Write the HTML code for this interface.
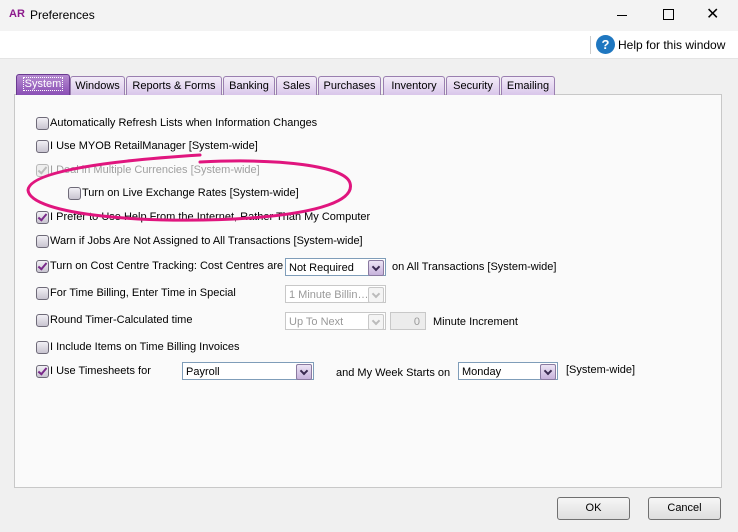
<!DOCTYPE html>
<html><head><style>
body{margin:0;width:738px;height:532px;background:#f0f0f0;font-family:"Liberation Sans",sans-serif;font-size:11px;color:#000;position:relative;overflow:hidden}
.a{position:absolute;white-space:nowrap}
.cb{position:absolute;width:11px;height:11px;border:1px solid #6e6a78;border-radius:3px;background:linear-gradient(#f2f0f5,#c8c4d0)}
.cb.on::after{content:"";position:absolute;left:3px;top:0px;width:3px;height:7px;border:solid #7a2a8a;border-width:0 2px 2px 0;transform:rotate(40deg)}
.cb.dis{border-color:#b8b8b8;background:#eee}
.cb.dis::after{border-color:#bbb}
.tab{position:absolute;top:76px;height:18px;border:1px solid #9a7fb0;border-bottom:none;border-radius:3px 3px 0 0;background:linear-gradient(#f3ecf8,#d9c6ea);text-align:center;line-height:18px;font-size:11px}
.sel{position:absolute;height:18px;border:1px solid #7f9db9;background:#fff;font-size:11px;line-height:18px;padding-left:3px;box-sizing:border-box}
.sel i{position:absolute;right:1px;top:1px;width:14px;height:14px;border:1px solid #8a7aa0;border-radius:2px;background:linear-gradient(#ece4f4,#c7b2dc)}
.sel i::after{content:"";position:absolute;left:4px;top:3px;width:4px;height:4px;border:solid #3a2a50;border-width:0 2px 2px 0;transform:rotate(45deg)}
.sel.d{border-color:#c8c8c8;color:#999}
.sel.d i{border-color:#c8c8c8;background:#f4f4f4}
.sel.d i::after{border-color:#bbb}
.btn{position:absolute;top:497px;width:71px;height:21px;border:1px solid #707070;border-radius:3px;background:linear-gradient(#f6f6f6,#dedede);text-align:center;line-height:21px;font-size:11px}
.g{color:#a0a0a0}
</style></head><body>
<div class="a" style="left:0;top:0;width:738px;height:31px;background:#f3f3f3"></div>
<div class="a" style="left:9px;top:8px;font-weight:bold;color:#8c1a8c;font-size:11px">AR</div>
<div class="a" style="left:30px;top:8px;font-size:12px">Preferences</div>
<div class="a" style="left:617px;top:15px;width:10px;height:1px;background:#000"></div>
<div class="a" style="left:663px;top:9px;width:9px;height:9px;border:1px solid #000"></div>
<div class="a" style="left:706px;top:4px;font-size:16px">✕</div>
<div class="a" style="left:0;top:31px;width:738px;height:27px;background:#fff;border-bottom:1px solid #e4e4e4"></div>
<div class="a" style="left:590px;top:36px;width:1px;height:18px;background:#ccc"></div>
<div class="a" style="left:596px;top:35px;width:19px;height:19px;border-radius:50%;background:#1f77c0;color:#fff;font-weight:bold;text-align:center;line-height:19px;font-size:13px">?</div>
<div class="a" style="left:618px;top:38px;font-size:12px">Help for this window</div>
<div class="a" style="left:14px;top:94px;width:706px;height:392px;background:#fafafa;border:1px solid #c8c8c8"></div>
<div class="tab" style="left:16px;width:52px;top:74px;height:20px;background:linear-gradient(#b58ad0,#8a4fb5);color:#fff;border-color:#6a3a90"><span style="border:1px dotted #fff;padding:0 1px">System</span></div>
<div class="tab" style="left:70px;width:53px">Windows</div>
<div class="tab" style="left:126px;width:94px">Reports &amp; Forms</div>
<div class="tab" style="left:223px;width:50px">Banking</div>
<div class="tab" style="left:276px;width:39px">Sales</div>
<div class="tab" style="left:318px;width:61px">Purchases</div>
<div class="tab" style="left:383px;width:60px">Inventory</div>
<div class="tab" style="left:446px;width:52px">Security</div>
<div class="tab" style="left:501px;width:52px">Emailing</div>

<div class="cb" style="left:36px;top:117px"></div><div class="a" style="left:50px;top:117px">Automatically Refresh Lists when Information Changes</div>
<div class="cb" style="left:36px;top:140px"></div><div class="a" style="left:50px;top:140px">I Use MYOB RetailManager [System-wide]</div>
<div class="cb on dis" style="left:36px;top:164px"></div><div class="a g" style="left:50px;top:164px">I Deal in Multiple Currencies [System-wide]</div>
<div class="cb" style="left:68px;top:187px"></div><div class="a" style="left:82px;top:187px">Turn on Live Exchange Rates [System-wide]</div>
<div class="cb on" style="left:36px;top:211px"></div><div class="a" style="left:50px;top:211px">I Prefer to Use Help From the Internet, Rather Than My Computer</div>
<div class="cb" style="left:36px;top:235px"></div><div class="a" style="left:50px;top:235px">Warn if Jobs Are Not Assigned to All Transactions [System-wide]</div>
<div class="cb on" style="left:36px;top:260px"></div><div class="a" style="left:50px;top:260px">Turn on Cost Centre Tracking: Cost Centres are</div>
<div class="sel" style="left:285px;top:258px;width:101px">Not Required<i></i></div>
<div class="a" style="left:392px;top:261px">on All Transactions [System-wide]</div>
<div class="cb" style="left:36px;top:287px"></div><div class="a" style="left:50px;top:287px">For Time Billing, Enter Time in Special</div>
<div class="sel d" style="left:285px;top:285px;width:101px">1 Minute Billin…<i></i></div>
<div class="cb" style="left:36px;top:314px"></div><div class="a" style="left:50px;top:314px">Round Timer-Calculated time</div>
<div class="sel d" style="left:285px;top:312px;width:101px">Up To Next<i></i></div>
<div class="a" style="left:390px;top:312px;width:36px;height:18px;border:1px solid #c8c8c8;background:#ececec;color:#999;text-align:right;line-height:18px;box-sizing:border-box;padding-right:5px">0</div>
<div class="a" style="left:433px;top:316px">Minute Increment</div>
<div class="cb" style="left:36px;top:341px"></div><div class="a" style="left:50px;top:341px">I Include Items on Time Billing Invoices</div>
<div class="cb on" style="left:36px;top:365px"></div><div class="a" style="left:50px;top:365px">I Use Timesheets for</div>
<div class="sel" style="left:182px;top:362px;width:132px">Payroll<i></i></div>
<div class="a" style="left:336px;top:367px">and My Week Starts on</div>
<div class="sel" style="left:458px;top:362px;width:100px">Monday<i></i></div>
<div class="a" style="left:566px;top:364px">[System-wide]</div>

<svg class="a" style="left:0;top:0" width="738" height="532"><path d="M200 155 C120 160 30 170 28 190 C30 215 150 225 250 218 C320 213 355 200 350 183 C345 166 280 158 200 162" fill="none" stroke="#e0157e" stroke-width="3" stroke-linecap="round"/></svg>

<div class="btn" style="left:557px">OK</div>
<div class="btn" style="left:648px">Cancel</div>
</body></html>
